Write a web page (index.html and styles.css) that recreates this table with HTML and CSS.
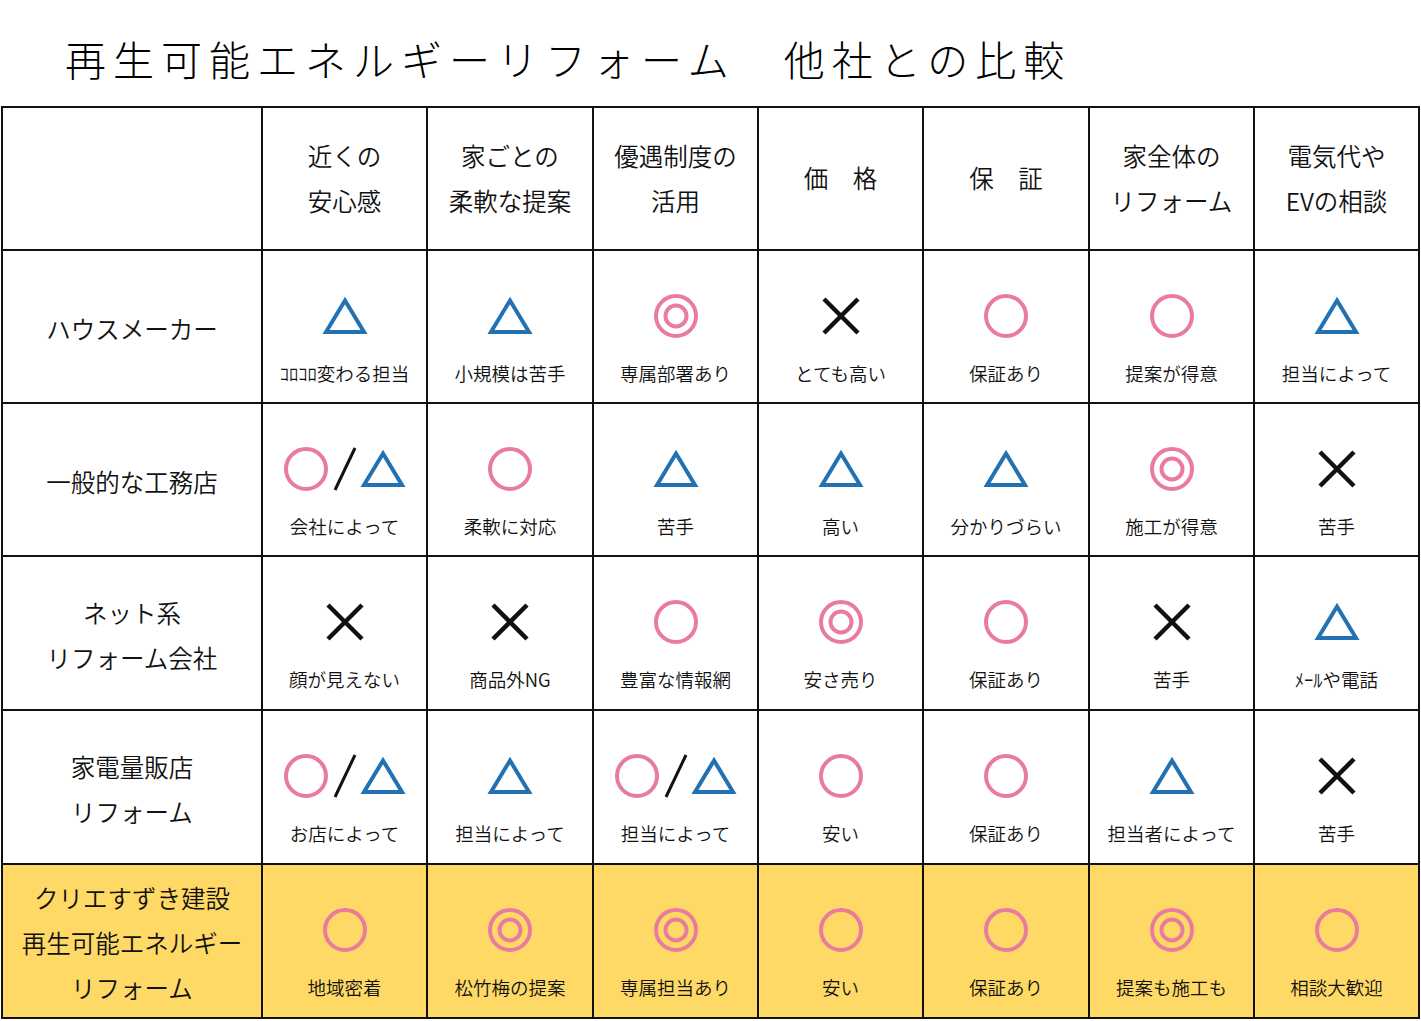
FILE: index.html
```html
<!DOCTYPE html>
<html lang="ja">
<head>
<meta charset="utf-8">
<title>再生可能エネルギーリフォーム 他社との比較</title>
<link rel="stylesheet" href="styles.css">
</head>
<body>
<svg width="0" height="0" class="defs">
  <defs>
    <symbol id="maru" viewBox="0 0 46 46"><circle cx="23" cy="23" r="20" fill="none" stroke="#e97c9e" stroke-width="4"/></symbol>
    <symbol id="nijumaru" viewBox="0 0 46 46"><circle cx="23" cy="23" r="20" fill="none" stroke="#e97c9e" stroke-width="4"/><circle cx="23" cy="23" r="10.5" fill="none" stroke="#e97c9e" stroke-width="4"/></symbol>
    <symbol id="sankaku" viewBox="0 0 46 46"><polygon points="23,7.5 42,39 4,39" fill="none" stroke="#2272b3" stroke-width="4"/></symbol>
    <symbol id="batsu" viewBox="0 0 46 46"><path d="M6 6 L40 40 M40 6 L6 40" stroke="#111" stroke-width="4.5" fill="none"/></symbol>
    <symbol id="slash" viewBox="0 0 31 46"><path d="M26 2 L6 44" stroke="#111" stroke-width="3" fill="none"/></symbol>
  </defs>
</svg>
<h1 class="title">再生可能エネルギーリフォーム　他社との比較</h1>
<div class="grid">
  <div class="cell head"></div>
  <div class="cell head">近くの<br>安心感</div>
  <div class="cell head">家ごとの<br>柔軟な提案</div>
  <div class="cell head">優遇制度の<br>活用</div>
  <div class="cell head">価　格</div>
  <div class="cell head">保　証</div>
  <div class="cell head">家全体の<br>リフォーム</div>
  <div class="cell head">電気代や<br>EVの相談</div>

  <div class="cell label">ハウスメーカー</div>
  <div class="cell data"><svg class="sym"><use href="#sankaku"/></svg><span class="cap">ｺﾛｺﾛ変わる担当</span></div>
  <div class="cell data"><svg class="sym"><use href="#sankaku"/></svg><span class="cap">小規模は苦手</span></div>
  <div class="cell data"><svg class="sym"><use href="#nijumaru"/></svg><span class="cap">専属部署あり</span></div>
  <div class="cell data"><svg class="sym"><use href="#batsu"/></svg><span class="cap">とても高い</span></div>
  <div class="cell data"><svg class="sym"><use href="#maru"/></svg><span class="cap">保証あり</span></div>
  <div class="cell data"><svg class="sym"><use href="#maru"/></svg><span class="cap">提案が得意</span></div>
  <div class="cell data"><svg class="sym"><use href="#sankaku"/></svg><span class="cap">担当によって</span></div>

  <div class="cell label">一般的な工務店</div>
  <div class="cell data"><span class="combo"><svg class="sym"><use href="#maru"/></svg><svg class="slash"><use href="#slash"/></svg><svg class="sym"><use href="#sankaku"/></svg></span><span class="cap">会社によって</span></div>
  <div class="cell data"><svg class="sym"><use href="#maru"/></svg><span class="cap">柔軟に対応</span></div>
  <div class="cell data"><svg class="sym"><use href="#sankaku"/></svg><span class="cap">苦手</span></div>
  <div class="cell data"><svg class="sym"><use href="#sankaku"/></svg><span class="cap">高い</span></div>
  <div class="cell data"><svg class="sym"><use href="#sankaku"/></svg><span class="cap">分かりづらい</span></div>
  <div class="cell data"><svg class="sym"><use href="#nijumaru"/></svg><span class="cap">施工が得意</span></div>
  <div class="cell data"><svg class="sym"><use href="#batsu"/></svg><span class="cap">苦手</span></div>

  <div class="cell label">ネット系<br>リフォーム会社</div>
  <div class="cell data"><svg class="sym"><use href="#batsu"/></svg><span class="cap">顔が見えない</span></div>
  <div class="cell data"><svg class="sym"><use href="#batsu"/></svg><span class="cap">商品外NG</span></div>
  <div class="cell data"><svg class="sym"><use href="#maru"/></svg><span class="cap">豊富な情報網</span></div>
  <div class="cell data"><svg class="sym"><use href="#nijumaru"/></svg><span class="cap">安さ売り</span></div>
  <div class="cell data"><svg class="sym"><use href="#maru"/></svg><span class="cap">保証あり</span></div>
  <div class="cell data"><svg class="sym"><use href="#batsu"/></svg><span class="cap">苦手</span></div>
  <div class="cell data"><svg class="sym"><use href="#sankaku"/></svg><span class="cap">ﾒｰﾙや電話</span></div>

  <div class="cell label">家電量販店<br>リフォーム</div>
  <div class="cell data"><span class="combo"><svg class="sym"><use href="#maru"/></svg><svg class="slash"><use href="#slash"/></svg><svg class="sym"><use href="#sankaku"/></svg></span><span class="cap">お店によって</span></div>
  <div class="cell data"><svg class="sym"><use href="#sankaku"/></svg><span class="cap">担当によって</span></div>
  <div class="cell data"><span class="combo"><svg class="sym"><use href="#maru"/></svg><svg class="slash"><use href="#slash"/></svg><svg class="sym"><use href="#sankaku"/></svg></span><span class="cap">担当によって</span></div>
  <div class="cell data"><svg class="sym"><use href="#maru"/></svg><span class="cap">安い</span></div>
  <div class="cell data"><svg class="sym"><use href="#maru"/></svg><span class="cap">保証あり</span></div>
  <div class="cell data"><svg class="sym"><use href="#sankaku"/></svg><span class="cap">担当者によって</span></div>
  <div class="cell data"><svg class="sym"><use href="#batsu"/></svg><span class="cap">苦手</span></div>

  <div class="cell label hl">クリエすずき建設<br>再生可能エネルギー<br>リフォーム</div>
  <div class="cell data hl"><svg class="sym"><use href="#maru"/></svg><span class="cap">地域密着</span></div>
  <div class="cell data hl"><svg class="sym"><use href="#nijumaru"/></svg><span class="cap">松竹梅の提案</span></div>
  <div class="cell data hl"><svg class="sym"><use href="#nijumaru"/></svg><span class="cap">専属担当あり</span></div>
  <div class="cell data hl"><svg class="sym"><use href="#maru"/></svg><span class="cap">安い</span></div>
  <div class="cell data hl"><svg class="sym"><use href="#maru"/></svg><span class="cap">保証あり</span></div>
  <div class="cell data hl"><svg class="sym"><use href="#nijumaru"/></svg><span class="cap">提案も施工も</span></div>
  <div class="cell data hl"><svg class="sym"><use href="#maru"/></svg><span class="cap">相談大歓迎</span></div>
</div>
</body>
</html>
```
FILE: styles.css
```css
html, body {
  margin: 0;
  padding: 0;
  background: #ffffff;
}
body {
  font-family: "Noto Sans CJK JP", "Noto Sans", sans-serif;
  font-weight: 350;
  color: #111;
  width: 1421px;
  height: 1021px;
  overflow: hidden;
}
.defs {
  position: absolute;
  width: 0;
  height: 0;
}
.title {
  margin: 0;
  height: 106px;
  box-sizing: border-box;
  padding: 29px 0 0 65px;
  font-size: 41px;
  font-weight: 300;
  line-height: 58px;
  letter-spacing: 7px;
  color: #000;
  white-space: nowrap;
}
.grid {
  margin-left: 1px;
  width: 1419px;
  box-sizing: border-box;
  display: grid;
  grid-template-columns: 258px 163px 164px 163px 163px 164px 163px 163px;
  grid-template-rows: 141px 151px 151px 152px 152px 152px;
  gap: 2px;
  padding: 2px;
  background: #111;
}
.cell {
  background: #ffffff;
}
.cell.hl {
  background: #ffd966;
}
.head {
  display: flex;
  align-items: center;
  justify-content: center;
  text-align: center;
  font-size: 24.5px;
  line-height: 45px;
  padding-bottom: 2px;
  box-sizing: border-box;
}
.label {
  display: flex;
  align-items: center;
  justify-content: center;
  text-align: center;
  font-size: 24.5px;
  line-height: 45px;
  padding-top: 3px;
  box-sizing: border-box;
}
.data {
  display: flex;
  flex-direction: column;
  align-items: center;
  padding-top: 42px;
  box-sizing: border-box;
}
.sym {
  width: 46px;
  height: 46px;
  display: block;
}
.combo {
  display: flex;
  align-items: center;
  height: 46px;
}
.slash {
  width: 31px;
  height: 46px;
  display: block;
}
.cap {
  margin-top: 22px;
  font-size: 18.5px;
  line-height: 24px;
  white-space: nowrap;
}
```
